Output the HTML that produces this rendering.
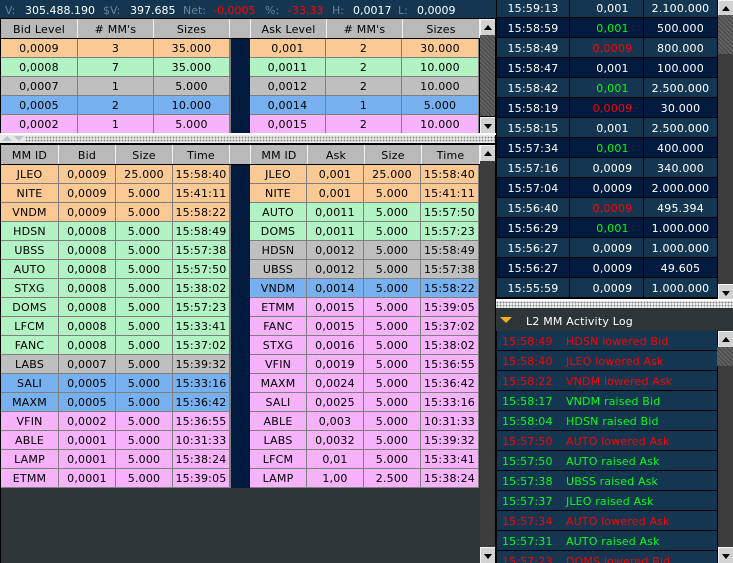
<!DOCTYPE html>
<html><head><meta charset="utf-8"><style>
html,body{margin:0;padding:0;background:#000}
body{position:relative;width:733px;height:563px;overflow:hidden;font:11px "DejaVu Sans","Liberation Sans",sans-serif;letter-spacing:.2px;color:#000}
.a{position:absolute}
table{position:absolute;border-collapse:separate;border-spacing:0;table-layout:fixed}
td{padding:0;text-align:center;white-space:nowrap;overflow:hidden;box-sizing:border-box}
.g td{height:19px;padding-top:2px;line-height:16px;border-right:1px solid #7f7f7f;border-bottom:1px solid #7f7f7f;color:#000}
.h td{height:19px;padding-top:3px;line-height:16px;background:#b9b9b9;border-right:1px solid #f2f2f2;color:#000}
.o td{background:#fbc994}.n td{background:#b2f3c4}.y td{background:#bfbfbf}.b td{background:#77b0ef}.p td{background:#f6b3fb}
.t td{height:20px;padding-top:3px;line-height:16px;border-right:1px solid #000;border-bottom:1px solid #000;color:#fff}
.d td{background:#143650}.e td{background:#021a3e}
.t td:nth-child(2){padding-left:12px}
.t td.gr{color:#00ff10}.t td.re{color:#ff0000}
.re{color:#ff0000}
.l div{height:19px;line-height:21px;border-bottom:1px solid #000;background:#143650;white-space:nowrap;padding-left:5px;letter-spacing:.15px}
.l span{display:inline-block;width:64px}
.lg{color:#00ff10}.lr{color:#ff0000}
.btn{position:absolute;width:15px;background:#d2d2d2;border-top:1px solid #f4f4f4;border-left:1px solid #f4f4f4;box-sizing:border-box}
.up:after,.dn:after{content:"";position:absolute;left:3px;width:0;height:0;border-left:4px solid transparent;border-right:4px solid transparent}
.up:after{top:5px;border-bottom:5px solid #000}.dn:after{top:6px;border-top:5px solid #000}
.tr{position:absolute;background:#3c3c3c}
.th{position:absolute;background-color:#5a5a5a;background-image:repeating-linear-gradient(45deg,#6a6a6a 0 1px,#4e4e4e 1px 3px)}
.sp{position:absolute;background-color:#e8e8e8;background-image:radial-gradient(circle,#808080 0.7px,transparent 1px);background-size:3px 3px}
.bar{letter-spacing:0}
.bar span{position:absolute;top:1px;line-height:19px;height:18px}
.m{color:#6f8494}.w{color:#fff}
</style></head><body>
<div class="a" style="left:0;top:0;width:496px;height:18px;background:#143650"></div>
<div class="a bar" style="left:0;top:0;width:496px;height:18px;overflow:hidden">
<span class="m" style="left:5px">V:</span><span class="w" style="left:25px">305.488.190</span>
<span class="m" style="left:103px">$V:</span><span class="w" style="left:130px">397.685</span>
<span class="m" style="left:183px">Net:</span><span class="re" style="left:213px">-0,0005</span>
<span class="m" style="left:265px">%:</span><span class="re" style="left:288px">-33,33</span>
<span class="m" style="left:332px">H:</span><span class="w" style="left:353px">0,0017</span>
<span class="m" style="left:398px">L:</span><span class="w" style="left:417px">0,0009</span>
</div>

<!-- panel background -->
<div class="a" style="left:1px;top:165px;width:479px;height:398px;background:#2d3538"></div>

<!-- top headers -->
<div class="a" style="left:1px;top:19px;width:479px;height:19px;background:#b9b9b9"></div>
<div class="a" style="left:1px;top:145px;width:479px;height:19px;background:#b9b9b9"></div>

<table class="h" style="left:1px;top:19px;width:229px"><colgroup><col width="77"><col width="76"><col width="76"></colgroup><tr><td>Bid Level</td><td># MM's</td><td>Sizes</td></tr></table>
<table class="h" style="left:250px;top:19px;width:230px"><colgroup><col width="1"><col width="76"><col width="76"><col width="77"></colgroup><tr><td style="background:#f2f2f2"></td><td>Ask Level</td><td># MM's</td><td>Sizes</td></tr></table>

<table class="g" style="left:1px;top:39px;width:229px"><colgroup><col width="77"><col width="76"><col width="76"></colgroup>
<tr class="o"><td>0,0009</td><td>3</td><td>35.000</td></tr>
<tr class="n"><td>0,0008</td><td>7</td><td>35.000</td></tr>
<tr class="y"><td>0,0007</td><td>1</td><td>5.000</td></tr>
<tr class="b"><td>0,0005</td><td>2</td><td>10.000</td></tr>
<tr class="p"><td>0,0002</td><td>1</td><td>5.000</td></tr>
</table>
<div class="a" style="left:230px;top:39px;width:1px;height:94px;background:#7f7f7f"></div>
<div class="a" style="left:231px;top:39px;width:19px;height:94px;background:#021a3e"></div>
<table class="g" style="left:250px;top:39px;width:229px"><colgroup><col width="76"><col width="76"><col width="77"></colgroup>
<tr class="o"><td>0,001</td><td>2</td><td>30.000</td></tr>
<tr class="n"><td>0,0011</td><td>2</td><td>10.000</td></tr>
<tr class="y"><td>0,0012</td><td>2</td><td>10.000</td></tr>
<tr class="b"><td>0,0014</td><td>1</td><td>5.000</td></tr>
<tr class="p"><td>0,0015</td><td>2</td><td>10.000</td></tr>
</table>
<div class="a" style="left:0;top:38px;width:480px;height:1px;background:#000"></div>

<!-- upper scrollbar -->
<div class="btn up" style="left:480px;top:19px;height:16px"></div>
<div class="th" style="left:480px;top:35px;width:15px;height:81px"></div>
<div class="btn dn" style="left:480px;top:117px;height:16px"></div>

<!-- splitter -->
<div class="a" style="left:0;top:133px;width:496px;height:2px;background:#fff"></div>
<div class="a" style="left:0;top:135px;width:495px;height:8px;background:#e8e8e8"></div>
<div class="sp" style="left:25px;top:136px;width:470px;height:6px"></div>
<div class="a" style="left:2px;top:136px;width:0;height:0;border-left:5px solid transparent;border-right:5px solid transparent;border-bottom:5px solid #b8c4d0"></div>
<div class="a" style="left:14px;top:136px;width:0;height:0;border-left:5px solid transparent;border-right:5px solid transparent;border-top:5px solid #b8c4d0"></div>

<!-- lower grid -->
<table class="h" style="left:1px;top:145px;width:229px"><colgroup><col width="58"><col width="57"><col width="57"><col width="57"></colgroup><tr><td>MM ID</td><td>Bid</td><td>Size</td><td>Time</td></tr></table>
<table class="h" style="left:250px;top:145px;width:230px"><colgroup><col width="1"><col width="57"><col width="57"><col width="57"><col width="58"></colgroup><tr><td style="background:#f2f2f2"></td><td>MM ID</td><td>Ask</td><td>Size</td><td>Time</td></tr></table>
<div class="a" style="left:0;top:164px;width:480px;height:1px;background:#000"></div>

<table class="g" style="left:1px;top:165px;width:229px"><colgroup><col width="58"><col width="57"><col width="57"><col width="57"></colgroup>
<tr class="o"><td>JLEO</td><td>0,0009</td><td>25.000</td><td>15:58:40</td></tr>
<tr class="o"><td>NITE</td><td>0,0009</td><td>5.000</td><td>15:41:11</td></tr>
<tr class="o"><td>VNDM</td><td>0,0009</td><td>5.000</td><td>15:58:22</td></tr>
<tr class="n"><td>HDSN</td><td>0,0008</td><td>5.000</td><td>15:58:49</td></tr>
<tr class="n"><td>UBSS</td><td>0,0008</td><td>5.000</td><td>15:57:38</td></tr>
<tr class="n"><td>AUTO</td><td>0,0008</td><td>5.000</td><td>15:57:50</td></tr>
<tr class="n"><td>STXG</td><td>0,0008</td><td>5.000</td><td>15:38:02</td></tr>
<tr class="n"><td>DOMS</td><td>0,0008</td><td>5.000</td><td>15:57:23</td></tr>
<tr class="n"><td>LFCM</td><td>0,0008</td><td>5.000</td><td>15:33:41</td></tr>
<tr class="n"><td>FANC</td><td>0,0008</td><td>5.000</td><td>15:37:02</td></tr>
<tr class="y"><td>LABS</td><td>0,0007</td><td>5.000</td><td>15:39:32</td></tr>
<tr class="b"><td>SALI</td><td>0,0005</td><td>5.000</td><td>15:33:16</td></tr>
<tr class="b"><td>MAXM</td><td>0,0005</td><td>5.000</td><td>15:36:42</td></tr>
<tr class="p"><td>VFIN</td><td>0,0002</td><td>5.000</td><td>15:36:55</td></tr>
<tr class="p"><td>ABLE</td><td>0,0001</td><td>5.000</td><td>10:31:33</td></tr>
<tr class="p"><td>LAMP</td><td>0,0001</td><td>5.000</td><td>15:38:24</td></tr>
<tr class="p"><td>ETMM</td><td>0,0001</td><td>5.000</td><td>15:39:05</td></tr>
</table>
<div class="a" style="left:230px;top:165px;width:1px;height:323px;background:#7f7f7f"></div>
<div class="a" style="left:231px;top:165px;width:19px;height:323px;background:#021a3e"></div>
<table class="g" style="left:250px;top:165px;width:229px"><colgroup><col width="57"><col width="57"><col width="57"><col width="58"></colgroup>
<tr class="o"><td>JLEO</td><td>0,001</td><td>25.000</td><td>15:58:40</td></tr>
<tr class="o"><td>NITE</td><td>0,001</td><td>5.000</td><td>15:41:11</td></tr>
<tr class="n"><td>AUTO</td><td>0,0011</td><td>5.000</td><td>15:57:50</td></tr>
<tr class="n"><td>DOMS</td><td>0,0011</td><td>5.000</td><td>15:57:23</td></tr>
<tr class="y"><td>HDSN</td><td>0,0012</td><td>5.000</td><td>15:58:49</td></tr>
<tr class="y"><td>UBSS</td><td>0,0012</td><td>5.000</td><td>15:57:38</td></tr>
<tr class="b"><td>VNDM</td><td>0,0014</td><td>5.000</td><td>15:58:22</td></tr>
<tr class="p"><td>ETMM</td><td>0,0015</td><td>5.000</td><td>15:39:05</td></tr>
<tr class="p"><td>FANC</td><td>0,0015</td><td>5.000</td><td>15:37:02</td></tr>
<tr class="p"><td>STXG</td><td>0,0016</td><td>5.000</td><td>15:38:02</td></tr>
<tr class="p"><td>VFIN</td><td>0,0019</td><td>5.000</td><td>15:36:55</td></tr>
<tr class="p"><td>MAXM</td><td>0,0024</td><td>5.000</td><td>15:36:42</td></tr>
<tr class="p"><td>SALI</td><td>0,0025</td><td>5.000</td><td>15:33:16</td></tr>
<tr class="p"><td>ABLE</td><td>0,003</td><td>5.000</td><td>10:31:33</td></tr>
<tr class="p"><td>LABS</td><td>0,0032</td><td>5.000</td><td>15:39:32</td></tr>
<tr class="p"><td>LFCM</td><td>0,01</td><td>5.000</td><td>15:33:41</td></tr>
<tr class="p"><td>LAMP</td><td>1,00</td><td>2.500</td><td>15:38:24</td></tr>
</table>

<!-- lower scrollbar -->
<div class="btn up" style="left:480px;top:145px;height:16px"></div>
<div class="tr" style="left:480px;top:161px;width:15px;height:386px"></div>
<div class="btn dn" style="left:480px;top:547px;height:16px"></div>

<!-- time and sales -->
<table class="t" style="left:497px;top:-2px;width:221px"><colgroup><col width="73"><col width="74"><col width="74"></colgroup>
<tr class="d"><td>15:59:13</td><td>0,001</td><td>2.100.000</td></tr>
<tr class="e"><td>15:58:59</td><td class="gr">0,001</td><td>500.000</td></tr>
<tr class="d"><td>15:58:49</td><td class="re">0,0009</td><td>800.000</td></tr>
<tr class="e"><td>15:58:47</td><td>0,001</td><td>100.000</td></tr>
<tr class="d"><td>15:58:42</td><td class="gr">0,001</td><td>2.500.000</td></tr>
<tr class="e"><td>15:58:19</td><td class="re">0,0009</td><td>30.000</td></tr>
<tr class="d"><td>15:58:15</td><td>0,001</td><td>2.500.000</td></tr>
<tr class="e"><td>15:57:34</td><td class="gr">0,001</td><td>400.000</td></tr>
<tr class="d"><td>15:57:16</td><td>0,0009</td><td>340.000</td></tr>
<tr class="e"><td>15:57:04</td><td>0,0009</td><td>2.000.000</td></tr>
<tr class="d"><td>15:56:40</td><td class="re">0,0009</td><td>495.394</td></tr>
<tr class="e"><td>15:56:29</td><td class="gr">0,001</td><td>1.000.000</td></tr>
<tr class="d"><td>15:56:27</td><td>0,0009</td><td>1.000.000</td></tr>
<tr class="e"><td>15:56:27</td><td>0,0009</td><td>49.605</td></tr>
<tr class="d"><td>15:55:59</td><td>0,0009</td><td>1.000.000</td></tr>
</table>
<div class="btn up" style="left:718px;top:0;height:15px"></div>
<div class="th" style="left:718px;top:15px;width:15px;height:39px"></div>
<div class="tr" style="left:718px;top:54px;width:15px;height:230px"></div>
<div class="btn dn" style="left:718px;top:284px;height:15px"></div>

<!-- right splitter -->
<div class="a" style="left:496px;top:299px;width:237px;height:2px;background:#fff"></div>
<div class="sp" style="left:496px;top:301px;width:237px;height:7px"></div>
<div class="a" style="left:496px;top:308px;width:237px;height:23px;background:#2d3538"></div>
<div class="a" style="left:500px;top:317px;width:0;height:0;border-left:6px solid transparent;border-right:6px solid transparent;border-top:6px solid #f0b020"></div>
<div class="a" style="left:526px;top:312px;height:20px;line-height:20px;color:#fff">L2 MM Activity Log</div>

<!-- log -->
<div class="a l" style="left:497px;top:331px;width:220px;height:232px;overflow:hidden">
<div class="lr"><span>15:58:49</span>HDSN lowered Bid</div>
<div class="lr"><span>15:58:40</span>JLEO lowered Ask</div>
<div class="lr"><span>15:58:22</span>VNDM lowered Ask</div>
<div class="lg"><span>15:58:17</span>VNDM raised Bid</div>
<div class="lg"><span>15:58:04</span>HDSN raised Bid</div>
<div class="lr"><span>15:57:50</span>AUTO lowered Ask</div>
<div class="lg"><span>15:57:50</span>AUTO raised Ask</div>
<div class="lg"><span>15:57:38</span>UBSS raised Ask</div>
<div class="lg"><span>15:57:37</span>JLEO raised Ask</div>
<div class="lr"><span>15:57:34</span>AUTO lowered Ask</div>
<div class="lg"><span>15:57:31</span>AUTO raised Ask</div>
<div class="lr"><span>15:57:23</span>DOMS lowered Bid</div>
</div>
<div class="btn up" style="left:718px;top:331px;height:16px"></div>
<div class="th" style="left:717px;top:347px;width:16px;height:19px"></div>
<div class="tr" style="left:718px;top:366px;width:15px;height:181px"></div>
<div class="btn dn" style="left:718px;top:547px;height:16px"></div>
</body></html>
